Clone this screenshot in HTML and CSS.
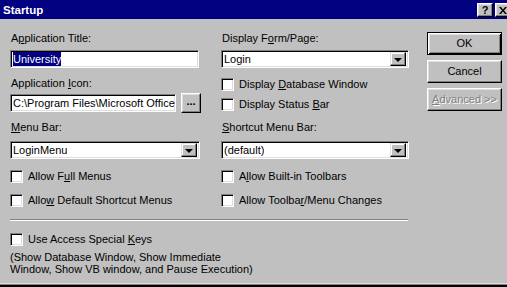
FILE: index.html
```html
<!DOCTYPE html>
<html>
<head>
<meta charset="utf-8">
<link rel="stylesheet" href="styles.css">
</head>
<body>
<div class="window">
  <div class="titlebar">
    <span class="title">Startup</span>
    <div class="tbtns">
      <span class="tbtn help">?</span>
      <span class="tbtn close"><svg width="8" height="7" viewBox="0 0 8 7"><path d="M0 0h2l2 2.5L6 0h2L5 3.5 8 7H6L4 4.5 2 7H0l3-3.5z" fill="#000"/></svg></span>
    </div>
  </div>
  <div class="body">
    <div class="main">
      <div class="grid sec1">
        <div class="label">A<u>p</u>plication Title:</div>
        <div class="label">Display F<u>o</u>rm/Page:</div>
        <div class="field text"><span class="sel">University</span></div>
        <div class="field combo"><span class="val">Login</span><span class="drop"><i></i></span></div>
      </div>
      <div class="grid sec2">
        <div class="col">
          <div class="label lbl-icon">Application <u>I</u>con:</div>
          <div class="iconrow">
            <div class="field text icon"><span class="val">C:\Program Files\Microsoft Office</span></div>
            <div class="btn dots">...</div>
          </div>
        </div>
        <div class="col">
          <div class="check c1"><span class="box"></span><span class="t">Display <u>D</u>atabase Window</span></div>
          <div class="check c2"><span class="box"></span><span class="t">Display Status <u>B</u>ar</span></div>
        </div>
      </div>
      <div class="grid sec3">
        <div class="label"><u>M</u>enu Bar:</div>
        <div class="label"><u>S</u>hortcut Menu Bar:</div>
        <div class="field combo"><span class="val">LoginMenu</span><span class="drop"><i></i></span></div>
        <div class="field combo"><span class="val">(default)</span><span class="drop"><i></i></span></div>
      </div>
      <div class="grid sec4">
        <div class="check"><span class="box"></span><span class="t">Allow F<u>u</u>ll Menus</span></div>
        <div class="check"><span class="box"></span><span class="t">A<u>l</u>low Built-in Toolbars</span></div>
        <div class="check"><span class="box"></span><span class="t">Allo<u>w</u> Default Shortcut Menus</span></div>
        <div class="check"><span class="box"></span><span class="t">Allow Toolba<u>r</u>/Menu Changes</span></div>
      </div>
      <div class="sep"></div>
      <div class="check keys"><span class="box"></span><span class="t">Use Access Special <u>K</u>eys</span></div>
      <div class="note">(Show Database Window, Show Immediate<br>Window, Show VB window, and Pause Execution)</div>
    </div>
    <div class="buttons">
      <div class="btn push default">OK</div>
      <div class="btn push">Cancel</div>
      <div class="btn push disabled"><span class="t"><u>A</u>dvanced &gt;&gt;</span></div>
    </div>
  </div>
</div>
</body>
</html>
```
FILE: styles.css
```css
html, body {
  margin: 0;
  padding: 0;
  overflow: hidden;
  background: #c0c0c0;
}
.window {
  width: 511px;
  height: 287px;
  box-sizing: border-box;
  background: #c0c0c0;
  font-family: "Liberation Sans", Arial, sans-serif;
  font-size: 11px;
  line-height: 13px;
  color: #000;
  box-shadow: inset 0 -2px #000, inset 0 -3px #808080, inset 0 -4px #dfdfdf;
}
.titlebar {
  height: 19px;
  background: #000080;
  display: flex;
  align-items: center;
  justify-content: space-between;
}
.title {
  color: #fff;
  font-weight: bold;
  font-size: 11.5px;
  padding-left: 3px;
  padding-top: 2px;
}
.tbtns {
  display: flex;
  gap: 2px;
  padding-top: 1px;
}
.tbtn {
  width: 16px;
  height: 14px;
  box-sizing: border-box;
  background: #c0c0c0;
  border: 1px solid;
  border-color: #fff #000 #000 #fff;
  box-shadow: inset -1px -1px #808080, inset 1px 1px #dfdfdf;
  display: flex;
  align-items: center;
  justify-content: center;
  font-weight: bold;
  font-size: 11px;
  line-height: 12px;
}
.body {
  display: flex;
}
.main {
  width: 399px;
  padding-left: 10px;
  display: flex;
  flex-direction: column;
}
.grid {
  display: grid;
  grid-template-columns: 190px 188px;
  column-gap: 21px;
}
.sec1 { margin-top: 13px; row-gap: 5px; }
.sec3 { margin-top: 8px; row-gap: 7px; }
.sec4 { margin-top: 11px; row-gap: 11px; }
.label {
  height: 13px;
  white-space: nowrap;
  padding-left: 1px;
}
.col {
  display: flex;
  flex-direction: column;
}
.lbl-icon { margin-top: 9px; }
.iconrow {
  margin-top: 3px;
  height: 20px;
  display: flex;
  align-items: center;
  gap: 5px;
}
.field {
  box-sizing: border-box;
  height: 18px;
  background: #fff;
  border: 1px solid;
  border-color: #808080 #fff #fff #808080;
  box-shadow: inset 1px 1px #000, inset -1px -1px #dfdfdf;
  display: flex;
  align-items: center;
  padding-left: 2px;
  white-space: nowrap;
  overflow: hidden;
}
.text { width: 189px; }
.icon { width: 166px; flex: none; }
.combo { width: 100%; padding-right: 2px; justify-content: space-between; }
.val { overflow: hidden; }
.sel {
  background: #000080;
  color: #fff;
  line-height: 14px;
}
.drop {
  width: 16px;
  height: 14px;
  box-sizing: border-box;
  background: #c0c0c0;
  border: 1px solid;
  border-color: #dfdfdf #000 #000 #dfdfdf;
  box-shadow: inset -1px -1px #808080, inset 1px 1px #fff;
  display: flex;
  align-items: center;
  justify-content: center;
  flex: none;
}
.drop i {
  width: 0;
  height: 0;
  border-left: 4px solid transparent;
  border-right: 4px solid transparent;
  border-top: 4px solid #000;
  margin-top: 1px;
}
.btn {
  box-sizing: border-box;
  background: #c0c0c0;
  border: 1px solid;
  border-color: #fff #000 #000 #fff;
  box-shadow: inset -1px -1px #808080, inset 1px 1px #dfdfdf;
  display: flex;
  align-items: center;
  justify-content: center;
  white-space: nowrap;
}
.dots {
  width: 20px;
  height: 20px;
  font-weight: bold;
  flex: none;
  padding-bottom: 3px;
}
.check {
  height: 13px;
  display: flex;
  align-items: center;
  gap: 5px;
  white-space: nowrap;
}
.box {
  width: 13px;
  height: 13px;
  box-sizing: border-box;
  background: #fff;
  border: 1px solid;
  border-color: #808080 #fff #fff #808080;
  box-shadow: inset 1px 1px #000, inset -1px -1px #dfdfdf;
  flex: none;
}
.c1 { margin-top: 10px; }
.c2 { margin-top: 7px; }
.sep {
  margin-top: 12px;
  width: 398px;
  border-top: 1px solid #808080;
  border-bottom: 1px solid #fff;
  height: 0;
}
.keys { margin-top: 12px; }
.note {
  margin-top: 5px;
  line-height: 12px;
  white-space: nowrap;
}
.buttons {
  margin-left: 18px;
  margin-top: 13px;
  display: flex;
  flex-direction: column;
  gap: 5px;
}
.push {
  width: 75px;
  height: 23px;
}
.default {
  border: 1px solid #000;
  box-shadow: inset 1px 1px #fff, inset -1px -1px #000, inset 2px 2px #dfdfdf, inset -2px -2px #808080;
}
.disabled {
  color: #808080;
  text-shadow: 1px 1px #fff;
}
```
